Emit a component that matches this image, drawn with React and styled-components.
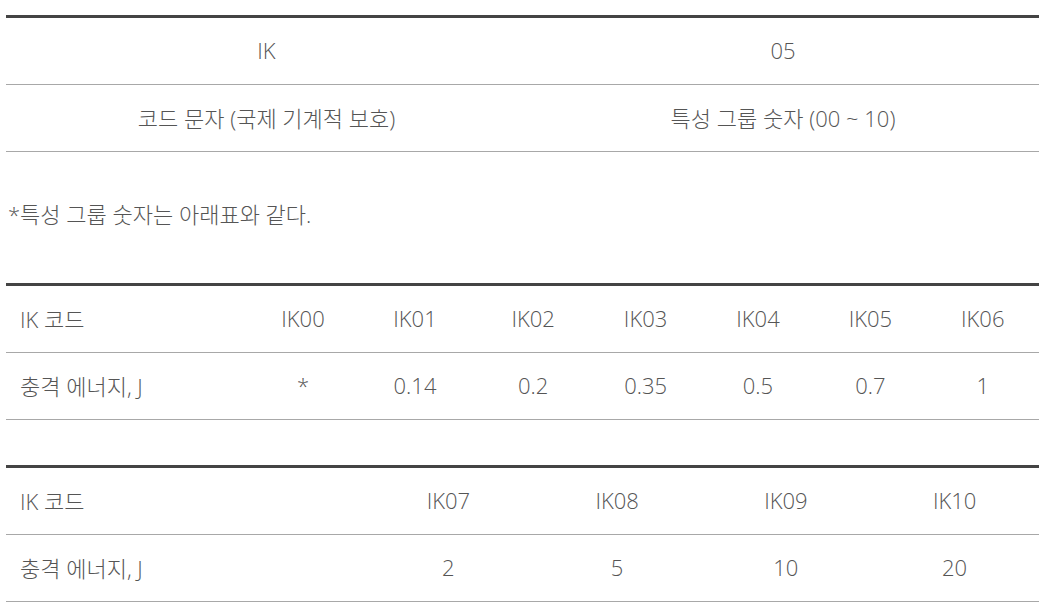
import React from "react";
import styled, { createGlobalStyle } from "styled-components";

const GlobalStyle = createGlobalStyle`
  html, body {
    margin: 0;
    padding: 0;
    background: #fff;
  }
  body {
    font-family: "Open Sans", "Noto Sans CJK KR", sans-serif;
    color: #555;
  }
`;

const Page = styled.div`
  padding: 15px 20px 0 6px;
`;

const Table = styled.table`
  width: 100%;
  table-layout: fixed;
  border-collapse: separate;
  border-spacing: 0;
  border-top: 3px solid #444;
  margin: 0 0 45px;

  &:last-child {
    margin-bottom: 0;
  }
`;

const Cell = styled.td`
  height: 63px;
  padding: 0 0 3px;
  border-bottom: 1px solid #a8a8a8;
  font-size: 22px;
  font-weight: 300;
  color: #555;
  text-align: ${(p) => (p.$label ? "left" : "center")};
  padding-left: ${(p) => (p.$label ? "14px" : "0")};
  vertical-align: middle;
  white-space: nowrap;
`;

const Note = styled.p`
  margin: 0 0 50px;
  padding-left: 2px;
  font-size: 22px;
  font-weight: 300;
  line-height: 34px;
  padding-bottom: 2px;
  color: #555;
`;

const codeTable = [
  ["IK", "05"],
  ["코드 문자 (국제 기계적 보호)", "특성 그룹 숫자 (00 ~ 10)"],
];

// column widths in px; the rest share what is left
const energyA = {
  widths: [247, 100, 124],
  codes: ["IK00", "IK01", "IK02", "IK03", "IK04", "IK05", "IK06"],
  values: ["*", "0.14", "0.2", "0.35", "0.5", "0.7", "1"],
};

const energyB = {
  widths: [358],
  codes: ["IK07", "IK08", "IK09", "IK10"],
  values: ["2", "5", "10", "20"],
};

const EnergyTable = ({ data }) => (
  <Table>
    <colgroup>
      {["label", ...data.codes].map((c, i) => (
        <col key={c} style={data.widths[i] ? { width: data.widths[i] } : undefined} />
      ))}
    </colgroup>
    <tbody>
      <tr>
        <Cell $label>IK 코드</Cell>
        {data.codes.map((c) => (
          <Cell key={c}>{c}</Cell>
        ))}
      </tr>
      <tr>
        <Cell $label>충격 에너지, J</Cell>
        {data.values.map((v, i) => (
          <Cell key={i}>{v}</Cell>
        ))}
      </tr>
    </tbody>
  </Table>
);

export default function App() {
  return (
    <Page>
      <GlobalStyle />
      <Table>
        <colgroup>
          <col style={{ width: 521 }} />
          <col />
        </colgroup>
        <tbody>
          {codeTable.map((row, i) => (
            <tr key={i}>
              {row.map((c) => (
                <Cell key={c}>{c}</Cell>
              ))}
            </tr>
          ))}
        </tbody>
      </Table>
      <Note>*특성 그룹 숫자는 아래표와 같다.</Note>
      <EnergyTable data={energyA} />
      <EnergyTable data={energyB} />
    </Page>
  );
}
